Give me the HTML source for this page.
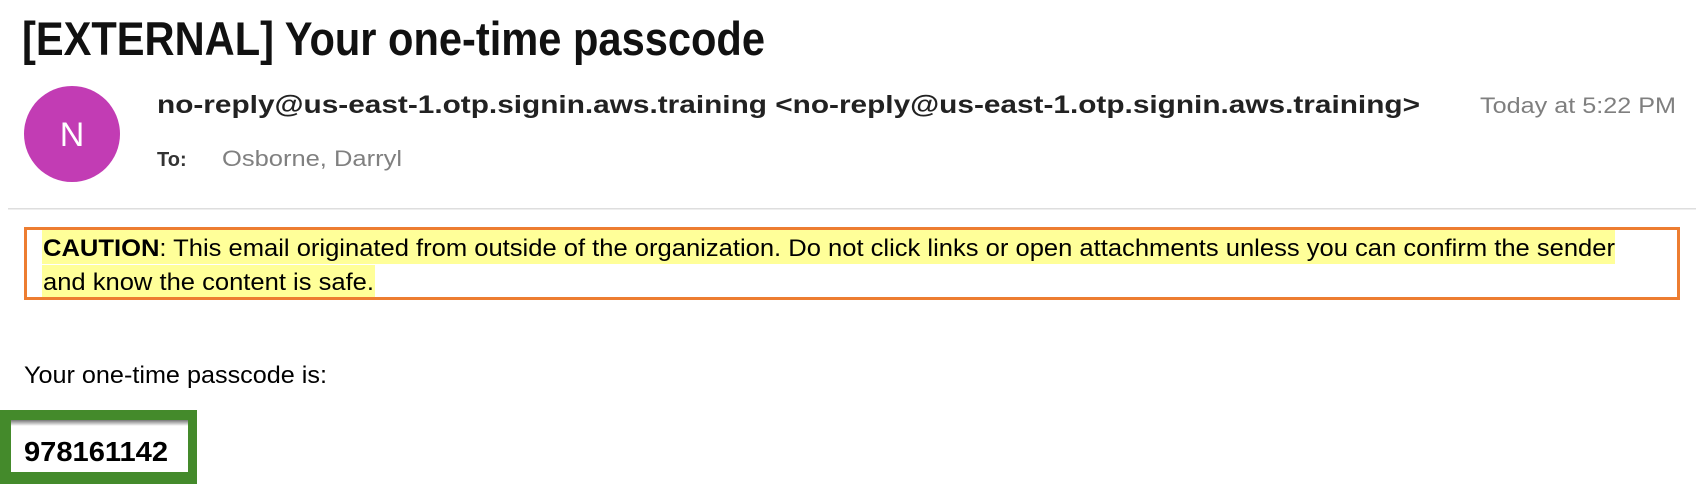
<!DOCTYPE html>
<html><head><meta charset="utf-8"><style>
html,body{margin:0;padding:0;background:#fff;width:1696px;height:484px;overflow:hidden}
svg{display:block}
</style></head><body>
<svg width="1696" height="484" xmlns="http://www.w3.org/2000/svg">
<text x="22" y="55" font-family="Liberation Sans, sans-serif" font-weight="bold" font-size="47" fill="#111" textLength="743" lengthAdjust="spacingAndGlyphs">[EXTERNAL] Your one-time passcode</text>
<circle cx="72" cy="134" r="48" fill="#c23cb4"/>
<text x="72" y="146" text-anchor="middle" font-family="Liberation Sans, sans-serif" font-size="34" fill="#fff">N</text>
<text x="157" y="113" font-family="Liberation Sans, sans-serif" font-weight="bold" font-size="25" fill="#222" textLength="1263" lengthAdjust="spacingAndGlyphs">no-reply@us-east-1.otp.signin.aws.training &lt;no-reply@us-east-1.otp.signin.aws.training&gt;</text>
<text x="1480" y="113" font-family="Liberation Sans, sans-serif" font-size="22" fill="#7f7f7f" textLength="196" lengthAdjust="spacingAndGlyphs">Today at 5:22 PM</text>
<text x="157" y="166" font-family="Liberation Sans, sans-serif" font-weight="bold" font-size="20" fill="#333">To:</text>
<text x="222" y="166" font-family="Liberation Sans, sans-serif" font-size="22" fill="#808080" textLength="180" lengthAdjust="spacingAndGlyphs">Osborne, Darryl</text>
<rect x="8" y="208" width="1688" height="1.5" fill="#dedede"/>
<rect x="25.5" y="228.5" width="1653" height="70" fill="none" stroke="#ed7d31" stroke-width="3"/>
<rect x="42" y="230" width="1573" height="34" fill="#ffff99"/>
<rect x="42" y="265" width="333" height="32" fill="#ffff99"/>
<text x="43" y="256" font-family="Liberation Sans, sans-serif" font-size="24" fill="#000" textLength="1572" lengthAdjust="spacingAndGlyphs"><tspan font-weight="bold">CAUTION</tspan>: This email originated from outside of the organization. Do not click links or open attachments unless you can confirm the sender</text>
<text x="43" y="290" font-family="Liberation Sans, sans-serif" font-size="24" fill="#000" textLength="331" lengthAdjust="spacingAndGlyphs">and know the content is safe.</text>
<text x="24" y="383" font-family="Liberation Sans, sans-serif" font-size="24" fill="#000" textLength="303" lengthAdjust="spacingAndGlyphs">Your one-time passcode is:</text>
<defs><linearGradient id="sh" x1="0" y1="0" x2="0" y2="1"><stop offset="0" stop-color="#777"/><stop offset="1" stop-color="#fff"/></linearGradient></defs>
<rect x="0" y="410" width="197" height="74" fill="#448a2b"/>
<rect x="11" y="420" width="177" height="52" fill="#fff"/>
<rect x="11" y="420" width="177" height="6" fill="url(#sh)"/>
<text x="24" y="461" font-family="Liberation Sans, sans-serif" font-weight="bold" font-size="28" fill="#000" textLength="144" lengthAdjust="spacingAndGlyphs">978161142</text>
</svg>
</body></html>
